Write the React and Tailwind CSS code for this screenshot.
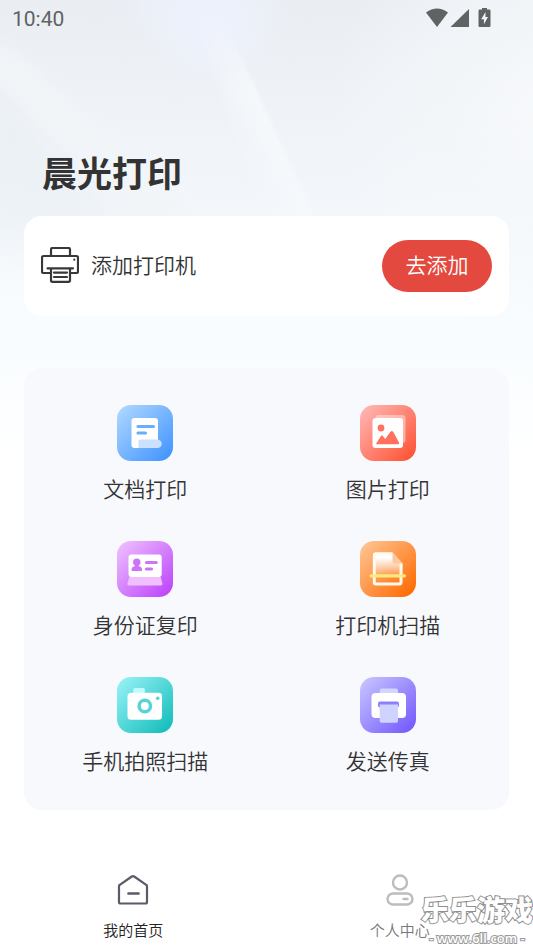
import clsx from 'clsx'

// ── Feature icons (56 x 56) ───────────────────────────
function Tile({ id, from, to, children }) {
  return (
    <svg viewBox="0 0 56 56" className="size-14" aria-hidden="true">
      <defs>
        <linearGradient id={id} x1="0" y1="0" x2="1" y2="1">
          <stop offset="0.05" stopColor={from} />
          <stop offset="0.95" stopColor={to} />
        </linearGradient>
      </defs>
      <rect width="56" height="56" rx="14" fill={`url(#${id})`} />
      {children}
    </svg>
  )
}

const DocIcon = () => (
  <Tile id="doc" from="#acd6ff" to="#4394ff">
    <rect x="14.5" y="13" width="26.5" height="30" rx="3" fill="#fff" />
    <path d="M21 21.5h15.5M21 28h7.5" stroke="#68adff" strokeWidth="3.2" strokeLinecap="round" />
    <path d="M21.5 43v-6.5a2 2 0 0 1 2-2h17a4.2 4.2 0 0 1 0 8.5z" fill="#cbe1ff" />
  </Tile>
)

const ImageIcon = () => (
  <Tile id="image" from="#ffb5b3" to="#ff5334">
    <rect x="15.5" y="10" width="30" height="28" rx="3" fill="#fff" opacity="0.42" />
    <rect x="12.5" y="13" width="30.5" height="30" rx="3" fill="#fff" />
    <circle cx="21" cy="23" r="3.4" fill="#ff715c" />
    <path d="M16.3 38.2 21 30.9q.9-1.2 1.8 0l2.4 3.2 5.2-7.4q1.4-1.6 2.8 0l5.8 10.7q.6 1.9-1.2 1.9H17q-1.4 0-.7-1.1z" fill="#ff715c" />
  </Tile>
)

const IdCardIcon = () => (
  <Tile id="idcard" from="#edbdff" to="#bd45fa">
    <path d="M12.5 35.5h31l1.9 7q.2 2-1.6 2H12q-1.8 0-1.6-2z" fill="#f1bffd" />
    <rect x="11.5" y="13.5" width="33.2" height="22.5" rx="3" fill="#fff" />
    <circle cx="19.8" cy="21.3" r="3.7" fill="#cd73f7" />
    <path d="M18.2 23h3.2v2q3.6 .8 3.6 3.5V30H14.6v-1.5q0-2.7 3.6-3.5z" fill="#cd73f7" />
    <path d="M29.5 21.5h9.7M29.5 28h5" stroke="#cd73f7" strokeWidth="3.2" strokeLinecap="round" />
  </Tile>
)

const ScanIcon = () => (
  <Tile id="scan" from="#ffc391" to="#ff6a00">
    <defs>
      <linearGradient id="scanPaper" x1="0" y1="0" x2="0" y2="1">
        <stop offset="0.15" stopColor="#fff" />
        <stop offset="0.75" stopColor="#fff" stopOpacity="0" />
      </linearGradient>
    </defs>
    <path d="M15.5 11.5h17l10 11v19.5q0 2.5-2.5 2.5H15.5q-2.5 0-2.5-2.5V14q0-2.5 2.5-2.5z" fill="url(#scanPaper)" />
    <path d="M32.5 13H16q-1.7 0-1.7 1.7v26.6q0 1.7 1.7 1.7h23.3q1.7 0 1.7-1.7V22.5" fill="none" stroke="#fff9ee" strokeWidth="3" />
    <path d="M32.5 11.5V20q0 2.5 2.5 2.5h7.5z" fill="#ffc79c" />
    <path d="M11 34.8h33.5" stroke="#ffe97a" strokeWidth="3.2" strokeLinecap="round" />
  </Tile>
)

const CameraIcon = () => (
  <Tile id="camera" from="#94f1f6" to="#13bdba">
    <path d="M16.3 17v-4.5q0-1.5 1.5-1.5h8.5q1.5 0 1.5 1.5V17z" fill="#c0fbfb" />
    <rect x="10.5" y="15.7" width="34.5" height="27" rx="3.5" fill="#fff" />
    <circle cx="27.8" cy="29" r="5.7" fill="none" stroke="#58d4d6" strokeWidth="3.5" />
    <circle cx="40.7" cy="21.2" r="1.8" fill="#58d4d6" />
  </Tile>
)

const FaxIcon = () => (
  <Tile id="fax" from="#c5c3ff" to="#7459ff">
    <path d="M19.7 17v-3.5q0-2 2-2H36q2 0 2 2V17z" fill="#d3d4ff" />
    <rect x="11.5" y="16" width="34.5" height="25" rx="4" fill="#fff" />
    <rect x="18" y="24.5" width="21" height="6" rx="2" fill="#8b80fa" />
    <path d="M19.7 27.5H38v16.5q0 1.8-1.8 1.8H21.5q-1.8 0-1.8-1.8z" fill="#ced3ff" />
  </Tile>
)

const features = [
  { label: '文档打印', Icon: DocIcon },
  { label: '图片打印', Icon: ImageIcon },
  { label: '身份证复印', Icon: IdCardIcon },
  { label: '打印机扫描', Icon: ScanIcon },
  { label: '手机拍照扫描', Icon: CameraIcon },
  { label: '发送传真', Icon: FaxIcon },
]

// ── Line icons ────────────────────────────────────────
function PrinterIcon() {
  return (
    <svg viewBox="0 0 38 38" className="size-[38px] shrink-0" fill="none" stroke="#383838" strokeWidth="2.2" strokeLinejoin="round" strokeLinecap="round" aria-hidden="true">
      <path d="M10 9V2.5Q10 1 11.5 1h16Q29 1 29 2.5V9" />
      <path d="M10 26H2.5Q1 26 1 24.5v-14Q1 9 2.5 9h33Q37 9 37 10.5v14q0 1.5-1.5 1.5H29" />
      <path d="M6.5 21.3h25.5M10 21.3v12q0 1.5 1.5 1.5h16q1.5 0 1.5-1.5v-12" />
      <path d="M13 25.6h13M13 30h13" />
      <circle cx="33.3" cy="12.7" r="1.1" fill="#383838" stroke="none" />
    </svg>
  )
}

function HomeIcon() {
  return (
    <svg viewBox="0 0 32 32" className="size-8" fill="none" stroke="#5b5b68" strokeWidth="2.2" strokeLinejoin="round" strokeLinecap="round" aria-hidden="true">
      <path d="M2 12.2Q2 11.3 2.8 10.8L14.8 2.5Q16 1.7 17.2 2.5L29.2 10.8Q30 11.3 30 12.2V28Q30 29.5 28.5 29.5H3.5Q2 29.5 2 28z" />
      <path d="M11.5 19.5h10" strokeWidth="2.6" />
    </svg>
  )
}

function UserIcon() {
  return (
    <svg viewBox="0 0 32 32" className="size-8" fill="none" stroke="#bdbdbd" strokeWidth="2.4" strokeLinecap="round" aria-hidden="true">
      <circle cx="16" cy="8.5" r="7" />
      <rect x="3.5" y="19.5" width="25" height="11" rx="5.5" />
      <path d="M19.5 25h4" />
    </svg>
  )
}

function StatusBar() {
  return (
    <header className="flex h-[38px] items-center justify-between pr-[41px] pl-3">
      <time className="font-['Roboto',sans-serif] text-[21px] leading-7 text-[#606264]">10:40</time>
      <svg viewBox="0 0 66 22" className="h-[22px] w-[66px]" fill="#606264" aria-hidden="true">
        <path d="M0 4.5Q11-3.4 22 4.5L11 19z" />
        <path d="M43 1v18H24.5z" />
        <path fillRule="evenodd" d="M56-.5h5v2h2.3q1.2 0 1.2 1.2v15.3q0 1-1.2 1h-9.6q-1.2 0-1.2-1V2.7q0-1.2 1.2-1.2H56zM59.500 4 55.200 11.200h2.700v5l4.100-7.300h-2.500z" />
      </svg>
    </header>
  )
}

// Soft light rays behind the header
function Backdrop() {
  return (
    <div className="absolute inset-x-0 top-0 -z-10 h-[470px] overflow-hidden bg-linear-to-b from-[#eaeef3] from-0% via-[#f8fcff] via-68% to-white">
      <svg viewBox="0 0 533 470" preserveAspectRatio="none" className="size-full" aria-hidden="true">
        <defs>
          <filter id="soft" x="-60%" y="-60%" width="220%" height="220%">
            <feGaussianBlur stdDeviation="20" />
          </filter>
          <filter id="edge" x="-30%" y="-30%" width="160%" height="160%">
            <feGaussianBlur stdDeviation="7" />
          </filter>
          <filter id="crisp" x="-20%" y="-20%" width="140%" height="140%">
            <feGaussianBlur stdDeviation="2" />
          </filter>
          <linearGradient id="ray" gradientUnits="userSpaceOnUse" x1="228" y1="140" x2="272" y2="118">
            <stop offset="0" stopColor="#f6f8fc" stopOpacity="0" />
            <stop offset="1" stopColor="#f6f8fc" />
          </linearGradient>
          <linearGradient id="rayFade" gradientUnits="userSpaceOnUse" x1="0" y1="20" x2="0" y2="90">
            <stop offset="0" stopColor="#000" />
            <stop offset="1" stopColor="#fff" />
          </linearGradient>
          <mask id="rayMask" maskUnits="userSpaceOnUse" x="0" y="0" width="533" height="470">
            <rect width="533" height="470" fill="url(#rayFade)" />
          </mask>
          <radialGradient id="side" gradientUnits="userSpaceOnUse" cx="560" cy="110" r="230">
            <stop offset="0" stopColor="#f7f9fb" />
            <stop offset="1" stopColor="#f7f9fb" stopOpacity="0" />
          </radialGradient>
        </defs>
        <rect width="533" height="470" fill="url(#side)" />
        <path d="M130-10h140L240 58 200 60z" fill="#eef2fe" filter="url(#soft)" />
        <path d="M-20 70 150 240H-20z" fill="#e6ecf2" opacity="0.5" filter="url(#soft)" />
        <path d="M-20 35 20 55 215 235 150 235-20 65z" fill="#f2f5f8" opacity="0.8" filter="url(#edge)" />
        <g mask="url(#rayMask)">
          <path d="M190 10 220 10 322 235 270 235z" fill="url(#ray)" filter="url(#crisp)" />
        </g>
      </svg>
    </div>
  )
}

function NavItem({ label, icon, active }) {
  return (
    <a
      href="#"
      aria-current={active ? 'page' : undefined}
      className={clsx('flex flex-1 flex-col items-center gap-[15px] text-[15px] leading-5 font-[350]', active ? 'text-[#222]' : 'text-[#777]')}
    >
      {icon}
      {label}
    </a>
  )
}

export default function App() {
  return (
    <div className="relative isolate flex min-h-screen flex-col bg-white font-['Roboto','Noto_Sans_CJK_SC',sans-serif] text-[#333]">
      <Backdrop />
      <StatusBar />

      <main className="px-6 pt-28">
        <h1 className="mb-3.5 pl-[18px] text-[35px] leading-[52px] font-bold">晨光打印</h1>

        <section className="flex h-[100px] items-center gap-3 rounded-[18px] bg-white pr-[17px] pl-[17px]">
          <PrinterIcon />
          <span className="flex-1 text-[21px] leading-7 font-[350]">添加打印机</span>
          <button type="button" className="h-[52px] w-[110px] rounded-full bg-[#e3493e] text-[21px] leading-7 font-[350] text-white">
            去添加
          </button>
        </section>

        <section className="mt-[52px] grid grid-cols-2 gap-y-[37px] rounded-[18px] bg-[#f8f9fd] pt-[37px] pb-[34px]">
          {features.map(({ label, Icon }) => (
            <button key={label} type="button" className="flex flex-col items-center gap-[15px] text-[21px] leading-7 font-[350]">
              <Icon />
              {label}
            </button>
          ))}
        </section>
      </main>

      <nav className="mt-auto flex pt-16 pb-[7px]">
        <NavItem label="我的首页" icon={<HomeIcon />} active />
        <NavItem label="个人中心" icon={<UserIcon />} />
      </nav>

      <div className="pointer-events-none absolute right-0 bottom-0 flex flex-col items-center text-white [paint-order:stroke_fill]">
        <span className="text-[28px] leading-8 font-black [-webkit-text-stroke:2px_#8f8f8f]">乐乐游戏</span>
        <span className="font-['Open_Sans',sans-serif] text-[13px] leading-5 font-semibold [-webkit-text-stroke:2px_#9a9a9a]">- www.6ll.com -</span>
      </div>
    </div>
  )
}
